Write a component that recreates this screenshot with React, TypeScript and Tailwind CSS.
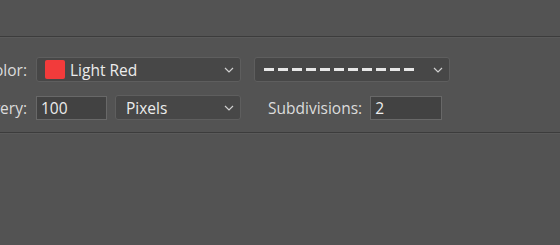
import React from "react";

const Chevron: React.FC = () => (
  <svg width="10" height="6" viewBox="0 0 10 6" className="shrink-0">
    <path d="M1 1l4 4 4-4" fill="none" stroke="#d0d0d0" strokeWidth="1.2" />
  </svg>
);

const Dropdown: React.FC<{ className: string; children: React.ReactNode }> = ({
  className,
  children,
}) => (
  <div
    className={`flex items-center h-[25px] rounded-[3px] border border-[#5e5e5e] bg-[#474747] pr-[6px] ${className}`}
  >
    <div className="flex flex-1 items-center">{children}</div>
    <Chevron />
  </div>
);

const NumberBox: React.FC<{ value: string; className: string }> = ({
  value,
  className,
}) => (
  <div
    className={`flex items-center h-[24px] border border-[#686868] bg-[#424242] pl-[4px] text-[#ececec] ${className}`}
  >
    {value}
  </div>
);

export default function App() {
  return (
    <div
      className="w-[560px] h-[245px] overflow-hidden bg-[#535353] text-[15.5px] leading-[20px] text-[#dcdcdc]"
      style={{ fontFamily: '"Open Sans", "Noto Sans", sans-serif' }}
    >
      {/* empty top strip */}
      <div className="h-[36px]" />
      <div className="h-px bg-[#3c3c3c]" />
      <div className="h-px bg-[#5a5a5a]" />

      {/* Grid options */}
      <div className="pt-[19px] flex flex-col gap-[13px]">
        <div className="flex items-center">
          <div className="w-[27px] flex justify-end whitespace-nowrap">Color:</div>
          <Dropdown className="ml-[9px] w-[205px] pl-[8px]">
            <div className="w-[20px] h-[19px] rounded-[2px] bg-[#f23b3b]" />
            <span className="ml-[5px] text-[#ececec]">Light Red</span>
          </Dropdown>
          <Dropdown className="ml-[13px] w-[196px] pl-[9px]">
            <div className="flex gap-[4px]">
              {Array.from({ length: 11 }).map((_, i) => (
                <div key={i} className="w-[10px] h-[3px] bg-[#e6e6e6]" />
              ))}
            </div>
          </Dropdown>
        </div>

        <div className="flex items-center">
          <div className="w-[27px] flex justify-end whitespace-nowrap">Every:</div>
          <NumberBox value="100" className="ml-[9px] w-[71px]" />
          <Dropdown className="ml-[8px] w-[126px] pl-[10px]">
            <span className="text-[#ececec]">Pixels</span>
          </Dropdown>
          <span className="ml-[27px]">Subdivisions:</span>
          <NumberBox value="2" className="ml-[8px] w-[72px]" />
        </div>
      </div>

      <div className="mt-[12px] h-px bg-[#3c3c3c]" />
      <div className="h-px bg-[#5a5a5a]" />
    </div>
  );
}
